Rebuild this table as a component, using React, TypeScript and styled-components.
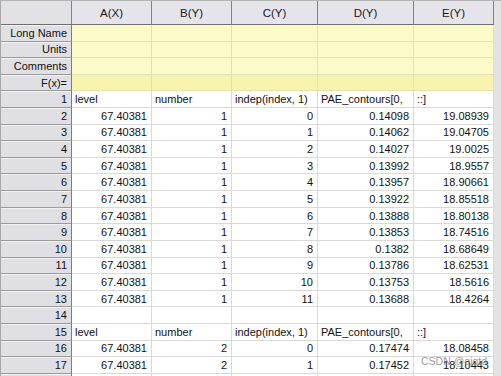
import React from 'react';
import styled, { createGlobalStyle } from 'styled-components';

const GlobalStyle = createGlobalStyle`
  html, body {
    margin: 0;
    padding: 0;
    background: #e3e3e3;
  }
  body {
    font-family: 'Liberation Sans', Arial, sans-serif;
  }
`;

const Frame = styled.div`
  position: relative;
  width: 501px;
  height: 376px;
  overflow: hidden;
  background: #e3e3e3;
`;

const Sheet = styled.div`
  display: grid;
  grid-template-columns: 71px 80px 80px 86px 96px 80px 1fr;
  grid-template-rows: 24px repeat(22, 16.62px);
  border-top: 1px solid #b4b4b4;
  border-left: 1px solid #a8a8a8;
  font-size: 11px;
  color: #111;
`;

const ColHeader = styled.div`
  background: #e4e4ea;
  border-right: 1px solid #828282;
  border-bottom: 1px solid #6e6e6e;
  display: flex;
  align-items: center;
  justify-content: center;
  font-size: 11.5px;
  color: #1a1a1a;
`;

const Corner = styled(ColHeader)`
  background: #e2e2e6;
`;

const RowLabel = styled.div`
  background: #e0e0e4;
  border-right: 1px solid #7c7c7c;
  border-bottom: 1px solid #9a9a9a;
  box-shadow: inset 0 1px 0 #f2f2f4;
  display: flex;
  align-items: center;
  justify-content: flex-end;
  padding-right: 4px;
  white-space: nowrap;
`;

type Kind = 'meta' | 'formula' | 'data';

const Cell = styled.div<{ $kind: Kind; $left?: boolean }>`
  background: ${p => (p.$kind === 'meta' ? '#fbfbc9' : p.$kind === 'formula' ? '#f7f4ad' : '#ffffff')};
  border-right: 1px solid ${p => (p.$kind === 'data' ? '#d9d9d9' : '#e2e1b6')};
  border-bottom: 1px solid ${p => (p.$kind === 'data' ? '#d9d9d9' : '#e2e1b6')};
  display: flex;
  align-items: center;
  justify-content: ${p => (p.$left ? 'flex-start' : 'flex-end')};
  padding: 0 4px 0 3px;
  white-space: nowrap;
  overflow: hidden;
`;

const Filler = styled.div`
  background: #e3e3e3;
`;

const Watermark = styled.div`
  position: absolute;
  left: 421px;
  top: 355px;
  font-size: 10.5px;
  color: rgba(120, 120, 120, 0.75);
  font-family: 'Liberation Sans', Arial, sans-serif;
  pointer-events: none;
`;

const columns = ['A(X)', 'B(Y)', 'C(Y)', 'D(Y)', 'E(Y)'];
const metaRows = ['Long Name', 'Units', 'Comments'];

const labelRow = ['level', 'number', 'indep(index, 1)', 'PAE_contours[0,', '::]'];

const firstBlock: [string, string][] = [
  ['0.14098', '19.08939'],
  ['0.14062', '19.04705'],
  ['0.14027', '19.0025'],
  ['0.13992', '18.9557'],
  ['0.13957', '18.90661'],
  ['0.13922', '18.85518'],
  ['0.13888', '18.80138'],
  ['0.13853', '18.74516'],
  ['0.1382', '18.68649'],
  ['0.13786', '18.62531'],
  ['0.13753', '18.5616'],
  ['0.13688', '18.4264'],
];

type Row = { cells: string[]; text?: boolean; hidden?: boolean };

const rows: Row[] = [
  { cells: labelRow, text: true },
  ...firstBlock.map(([d, e], i) => ({ cells: ['67.40381', '1', String(i), d, e] })),
  { cells: ['', '', '', '', ''] },
  { cells: labelRow, text: true },
  { cells: ['67.40381', '2', '0', '0.17474', '18.08458'] },
  { cells: ['67.40381', '2', '1', '0.17452', '18.10443'] },
  // row below the fold: only its top edge shows
  { cells: ['', '', '', '', ''], hidden: true },
];

const App: React.FC = () => {
  return (
    <Frame>
      <GlobalStyle />
      <Sheet>
        <Corner />
        {columns.map(c => (
          <ColHeader key={c}>{c}</ColHeader>
        ))}
        <Filler />

        {metaRows.map(m => (
          <React.Fragment key={m}>
            <RowLabel>{m}</RowLabel>
            {columns.map(c => (
              <Cell key={c} $kind="meta" />
            ))}
            <Filler />
          </React.Fragment>
        ))}

        <RowLabel>F(x)=</RowLabel>
        {columns.map(c => (
          <Cell key={c} $kind="formula" />
        ))}
        <Filler />

        {rows.map((r, i) => (
          <React.Fragment key={i}>
            <RowLabel>{r.hidden ? '' : i + 1}</RowLabel>
            {r.cells.map((v, j) => (
              <Cell key={j} $kind="data" $left={r.text}>
                {v}
              </Cell>
            ))}
            <Filler />
          </React.Fragment>
        ))}
      </Sheet>
      <Watermark>CSDN @qiqtd</Watermark>
    </Frame>
  );
};

export default App;
